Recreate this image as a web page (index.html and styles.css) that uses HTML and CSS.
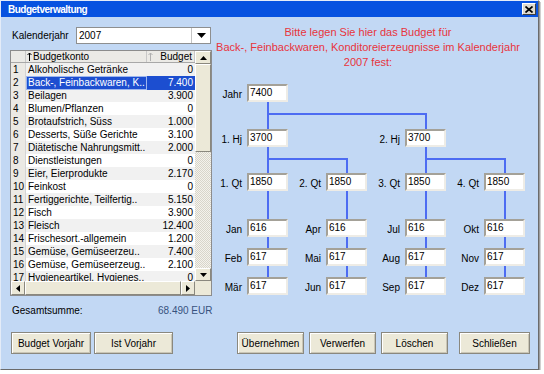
FILE: index.html
```html
<!DOCTYPE html>
<html lang="de">
<head>
    <meta charset="UTF-8">
    <meta name="viewport" content="width=device-width, initial-scale=1.0">
    <title>Budgetverwaltung</title>
    <link rel="stylesheet" href="styles.css">
</head>
<body>

<div class="window">
    <div class="titlebar">
        <span class="title">Budgetverwaltung</span>
        <button class="close">
            <svg width="8" height="7" viewBox="0 0 8 7"><path d="M0.5 0.5L7.5 6.5M7.5 0.5L0.5 6.5" stroke="#000" stroke-width="1.7"/></svg>
        </button>
    </div>

    <div class="content">
        <div class="main">
            <div class="left">
                <div class="year-row">
                    <label class="year-label">Kalenderjahr</label>
                    <div class="combo">
                        <span class="combo-value">2007</span>
                        <span class="combo-btn"><svg width="9" height="5" viewBox="0 0 9 5"><path d="M0 0H9L4.5 5Z" fill="#000"/></svg></span>
                    </div>
                </div>

                <div class="table">
                    <div class="table-top">
                        <div class="grid">
                            <div class="head">
                                <div class="hnum"></div>
                                <div class="hname"><svg class="sort" width="5" height="9" viewBox="0 0 5 9"><path d="M2.5 1V9M0.5 3L2.5 1L4.5 3" stroke="#000" fill="none"/></svg>Budgetkonto</div>
                                <div class="hbudget"><svg class="sort" width="5" height="9" viewBox="0 0 5 9"><path d="M2.5 1V9M0.5 3L2.5 1L4.5 3" stroke="#b0b0b0" fill="none"/></svg><span>Budget</span></div>
                            </div>
                            <div class="rows">
                                <div class="row"><span class="num">1</span><span class="name">Alkoholische Getränke</span><span class="budget">0</span></div>
                                <div class="row selected"><span class="num">2</span><span class="name">Back-, Feinbackwaren, K..</span><span class="budget">7.400</span></div>
                                <div class="row"><span class="num">3</span><span class="name">Beilagen</span><span class="budget">3.900</span></div>
                                <div class="row"><span class="num">4</span><span class="name">Blumen/Pflanzen</span><span class="budget">0</span></div>
                                <div class="row"><span class="num">5</span><span class="name">Brotaufstrich, Süss</span><span class="budget">1.000</span></div>
                                <div class="row"><span class="num">6</span><span class="name">Desserts, Süße Gerichte</span><span class="budget">3.100</span></div>
                                <div class="row"><span class="num">7</span><span class="name">Diätetische Nahrungsmitt..</span><span class="budget">2.000</span></div>
                                <div class="row"><span class="num">8</span><span class="name">Dienstleistungen</span><span class="budget">0</span></div>
                                <div class="row"><span class="num">9</span><span class="name">Eier, Eierprodukte</span><span class="budget">2.170</span></div>
                                <div class="row"><span class="num">10</span><span class="name">Feinkost</span><span class="budget">0</span></div>
                                <div class="row"><span class="num">11</span><span class="name">Fertiggerichte, Teilfertig..</span><span class="budget">5.150</span></div>
                                <div class="row"><span class="num">12</span><span class="name">Fisch</span><span class="budget">3.900</span></div>
                                <div class="row"><span class="num">13</span><span class="name">Fleisch</span><span class="budget">12.400</span></div>
                                <div class="row"><span class="num">14</span><span class="name">Frischesort.-allgemein</span><span class="budget">1.200</span></div>
                                <div class="row"><span class="num">15</span><span class="name">Gemüse, Gemüseerzeu..</span><span class="budget">7.400</span></div>
                                <div class="row"><span class="num">16</span><span class="name">Gemüse, Gemüseerzeug..</span><span class="budget">2.100</span></div>
                                <div class="row"><span class="num">17</span><span class="name">Hygieneartikel, Hygienes..</span><span class="budget">0</span></div>
                            </div>
                        </div>
                        <div class="vscroll">
                            <span class="sb-btn"><svg width="7" height="4" viewBox="0 0 7 4"><path d="M0 4H7L3.5 0Z" fill="#000"/></svg></span>
                            <span class="sb-thumb v"></span>
                            <span class="sb-track"></span>
                            <span class="sb-btn"><svg width="7" height="4" viewBox="0 0 7 4"><path d="M0 0H7L3.5 4Z" fill="#000"/></svg></span>
                        </div>
                    </div>
                    <div class="hscroll">
                        <span class="sb-btn h"><svg width="4" height="7" viewBox="0 0 4 7"><path d="M4 0V7L0 3.5Z" fill="#000"/></svg></span>
                        <span class="sb-thumb h"></span>
                        <span class="sb-btn h"><svg width="4" height="7" viewBox="0 0 4 7"><path d="M0 0V7L4 3.5Z" fill="#000"/></svg></span>
                        <span class="sb-corner"></span>
                    </div>
                </div>
            </div>

            <div class="right">
                <p class="message">
                    Bitte legen Sie hier das Budget für<br>
                    Back-, Feinbackwaren, Konditoreierzeugnisse im Kalenderjahr<br>
                    2007 fest:
                </p>

                <div class="tree">
                    <svg class="tree-lines" width="316" height="211" viewBox="0 0 316 211">
                        <path d="M56 18V45M56 30H214V45M56 63V89M56 75H135V89M214 63V89M214 75H293V89M56 107V193M135 107V193M214 107V193M293 107V193" stroke="#4d6cf2" stroke-width="2" fill="none"/>
                    </svg>

                    <div class="tree-row">
                        <div class="node"><label>Jahr</label><input type="text" value="7400"></div>
                    </div>
                    <div class="tree-row row-hj">
                        <div class="node"><label>1. Hj</label><input type="text" value="3700"></div>
                        <div class="node c3"><label>2. Hj</label><input type="text" value="3700"></div>
                    </div>
                    <div class="tree-row row-qt">
                        <div class="node"><label>1. Qt</label><input type="text" value="1850"></div>
                        <div class="node"><label>2. Qt</label><input type="text" value="1850"></div>
                        <div class="node"><label>3. Qt</label><input type="text" value="1850"></div>
                        <div class="node"><label>4. Qt</label><input type="text" value="1850"></div>
                    </div>
                    <div class="tree-row row-m1">
                        <div class="node"><label>Jan</label><input type="text" value="616"></div>
                        <div class="node"><label>Apr</label><input type="text" value="616"></div>
                        <div class="node"><label>Jul</label><input type="text" value="616"></div>
                        <div class="node"><label>Okt</label><input type="text" value="616"></div>
                    </div>
                    <div class="tree-row row-m">
                        <div class="node"><label>Feb</label><input type="text" value="617"></div>
                        <div class="node"><label>Mai</label><input type="text" value="617"></div>
                        <div class="node"><label>Aug</label><input type="text" value="617"></div>
                        <div class="node"><label>Nov</label><input type="text" value="617"></div>
                    </div>
                    <div class="tree-row row-m">
                        <div class="node"><label>Mär</label><input type="text" value="617"></div>
                        <div class="node"><label>Jun</label><input type="text" value="617"></div>
                        <div class="node"><label>Sep</label><input type="text" value="617"></div>
                        <div class="node"><label>Dez</label><input type="text" value="617"></div>
                    </div>
                </div>
            </div>
        </div>

        <div class="total">
            <span class="total-label">Gesamtsumme:</span>
            <span class="total-value">68.490 EUR</span>
        </div>

        <div class="buttons">
            <button class="btn w80">Budget Vorjahr</button>
            <button class="btn w79">Ist Vorjahr</button>
            <button class="btn w67 push">Übernehmen</button>
            <button class="btn w67">Verwerfen</button>
            <button class="btn w67">Löschen</button>
            <button class="btn w71 wide-gap">Schließen</button>
        </div>
    </div>
</div>

</body>
</html>
```

FILE: styles.css
```css
* {
    box-sizing: border-box;
}
body {
    margin: 0;
    background-color: #fff;
    font-family: "Liberation Sans", Arial, sans-serif;
    font-size: 10px;
    color: #000;
}
.window {
    width: 539px;
    height: 370px;
    background-color: #c2d8f4;
    border: 1px solid;
    border-color: #e4ecf8 #6b6b6b #6b6b6b #e4ecf8;
    box-shadow: 1px 1px 0 #9c9c9c, 2px 2px 0 #d0d0d0;
    display: flex;
    flex-direction: column;
}
.titlebar {
    height: 16px;
    background-color: #0752e0;
    color: #fff;
    font-weight: bold;
    letter-spacing: -0.5px;
    display: flex;
    align-items: center;
    justify-content: space-between;
    padding: 0 2px 0 7px;
}
.close {
    width: 14px;
    height: 12px;
    padding: 0;
    background-color: #dedad0;
    border: 1px solid;
    border-color: #fff #404040 #404040 #fff;
    display: flex;
    align-items: center;
    justify-content: center;
}
.content {
    flex: 1;
    display: flex;
    flex-direction: column;
    padding: 0 8px 0 9px;
}
.main {
    display: flex;
    height: 279px;
}
.left {
    width: 202px;
    padding-top: 10px;
}
.year-row {
    display: flex;
    align-items: center;
    height: 17px;
}
.year-label {
    width: 66px;
    padding-left: 2px;
}
.combo {
    width: 135px;
    height: 17px;
    background-color: #fff;
    border: 1px solid #8e8f8f;
    display: flex;
}
.combo-value {
    flex: 1;
    padding-left: 2px;
    line-height: 15px;
}
.combo-btn {
    width: 19px;
    border-left: 1px solid #c4c4c4;
    display: flex;
    align-items: center;
    justify-content: center;
}

/* table */
.table {
    margin-top: 6px;
    width: 202px;
    height: 246px;
    border: 1px solid #8c8c8c;
    background-color: #fff;
    display: flex;
    flex-direction: column;
}
.table-top {
    display: flex;
    height: 230px;
}
.grid {
    width: 184px;
    overflow: hidden;
}
.head, .row {
    display: grid;
    grid-template-columns: 15px 121px 48px;
}
.head {
    height: 12px;
    background-color: #ebeae6;
    border-bottom: 1px solid #a8a8a8;
}
.head > div {
    display: flex;
    align-items: center;
    border-right: 1px solid #c8c8c8;
}
.hname {
    padding-left: 1px;
}
.hbudget {
    justify-content: space-between;
    padding: 0 2px 0 1px;
}
.sort {
    margin-right: 1px;
}
.rows {
    height: 218px;
    overflow: hidden;
}
.row {
    height: 13px;
    line-height: 13px;
}
.row:nth-child(odd) {
    background-color: #f1f1f1;
}
.num {
    background-color: #ebe9e4;
    padding-left: 2px;
    border-right: 1px solid #d4d4d4;
    border-bottom: 1px solid #dcdcdc;
}
.name {
    padding-left: 2px;
    white-space: nowrap;
    overflow: hidden;
}
.budget {
    text-align: right;
    padding-right: 2px;
}
.row.selected .name, .row.selected .budget {
    background-color: #1c4ed0;
    color: #fff;
}
.row.selected .name {
    box-shadow: inset 0 0 0 1px #9db6ee;
}

/* scrollbars */
.vscroll {
    width: 16px;
    display: flex;
    flex-direction: column;
}
.sb-btn {
    height: 13px;
    background-color: #ece9d8;
    border: 1px solid;
    border-color: #fff #8a887e #8a887e #fff;
    display: flex;
    align-items: center;
    justify-content: center;
}
.sb-btn.h {
    width: 14px;
    height: 14px;
}
.sb-thumb {
    background-color: #ece9d8;
    border: 1px solid;
    border-color: #fff #8a887e #8a887e #fff;
}
.sb-thumb.v {
    height: 88px;
}
.sb-thumb.h {
    flex: 1;
}
.sb-track {
    flex: 1;
    background: repeating-conic-gradient(#d8d5ca 0 25%, #f4f2ec 0 50%) 0 0 / 2px 2px;
}
.hscroll {
    height: 14px;
    display: flex;
}
.sb-corner {
    width: 16px;
    background-color: #ece9d8;
}

/* right panel */
.right {
    flex: 1;
}
.message {
    margin: 8px 0 0 2px;
    width: 308px;
    text-align: center;
    color: #e8343c;
    font-size: 11px;
    line-height: 15px;
    white-space: nowrap;
}
.tree {
    position: relative;
    margin-top: 14px;
}
.tree-lines {
    position: absolute;
    left: 0;
    top: 0;
}
.tree-row {
    position: relative;
    display: grid;
    grid-template-columns: 76px 79px 79px 79px;
    height: 18px;
}
.row-hj {
    margin-top: 27px;
}
.row-qt {
    margin-top: 26px;
}
.row-m1 {
    margin-top: 28px;
}
.row-m {
    margin-top: 11px;
}
.c3 {
    grid-column: 3;
}
.node {
    display: flex;
    justify-content: flex-end;
    align-items: center;
}
.node label {
    margin: 2px 5px 0 0;
}
.node input {
    width: 41px;
    height: 18px;
    margin: 0;
    padding: 0 0 2px 1px;
    background-color: #fff;
    border: 2px solid;
    border-color: #a4a198 #eeece6 #eeece6 #a4a198;
    font-family: "Liberation Sans", Arial, sans-serif;
    font-size: 10px;
    color: #000;
}

/* bottom */
.total {
    margin-top: 8px;
    height: 13px;
    display: flex;
    align-items: center;
}
.total-label {
    width: 148px;
    padding-left: 2px;
}
.total-value {
    color: #37527e;
}
.buttons {
    margin-top: 15px;
    display: flex;
    gap: 5px;
    height: 22px;
}
.btn {
    height: 22px;
    padding: 0;
    background-color: #ece9d8;
    border: 1px solid #8a887e;
    box-shadow: inset 1px 1px 0 #fff, inset -1px -1px 0 #cac6b6;
    font-family: "Liberation Sans", Arial, sans-serif;
    font-size: 10px;
    color: #000;
}
.w80 {
    width: 80px;
    margin-left: 1px;
}
.w79 {
    width: 79px;
    margin-left: -2px;
}
.w67 {
    width: 67px;
}
.w71 {
    width: 71px;
}
.push {
    margin-left: auto;
}
.wide-gap {
    margin-left: 6px;
}
```
